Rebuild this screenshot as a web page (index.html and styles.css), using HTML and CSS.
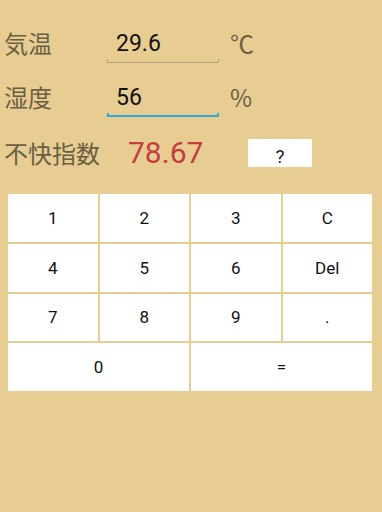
FILE: index.html
```html
<!DOCTYPE html>
<html lang="ja">
<head>
<meta charset="utf-8">
<title>不快指数</title>
<link rel="stylesheet" href="styles.css">
</head>
<body>
<div class="app">
  <div class="row row-temp">
    <div class="label">気温</div>
    <div class="field">
      <div class="val">29.6</div>
      <div class="line"></div>
    </div>
    <div class="unit">℃</div>
  </div>
  <div class="row row-hum">
    <div class="label">湿度</div>
    <div class="field focused">
      <div class="val">56</div>
      <div class="line"></div>
    </div>
    <div class="unit">%</div>
  </div>
  <div class="row row-result">
    <div class="label label-wide">不快指数</div>
    <div class="result">78.67</div>
    <div class="help">?</div>
  </div>
  <div class="keypad">
    <div class="key">1</div>
    <div class="key">2</div>
    <div class="key">3</div>
    <div class="key">C</div>
    <div class="key">4</div>
    <div class="key">5</div>
    <div class="key">6</div>
    <div class="key">Del</div>
    <div class="key">7</div>
    <div class="key">8</div>
    <div class="key">9</div>
    <div class="key">.</div>
    <div class="key key-wide">0</div>
    <div class="key key-wide">=</div>
  </div>
</div>
</body>
</html>
```

FILE: styles.css
```css
html, body {
  margin: 0;
  padding: 0;
  background: #e8cd92;
}

body {
  width: 382px;
  height: 512px;
  overflow: hidden;
  font-family: Roboto, "Noto Sans CJK JP", sans-serif;
}

.app {
  padding-top: 16px;
}

.row {
  display: flex;
  align-items: center;
  height: 54px;
}

.row-result {
  height: 58px;
}

.label {
  font-family: "Noto Sans CJK JP", sans-serif;
  font-size: 24px;
  color: #6b5e45;
  width: 103px;
  padding-left: 4px;
  line-height: 30px;
}

.label-wide {
  width: 124px;
}

.field {
  width: 112px;
  height: 40px;
  display: flex;
  flex-direction: column;
}

.val {
  font-family: Roboto, sans-serif;
  font-size: 23px;
  color: #111;
  height: 33px;
  padding-top: 3px;
  line-height: 36px;
  padding-left: 9px;
}

.line {
  height: 3px;
  border-style: solid;
  border-color: #b4a17e;
  border-width: 0 1px 1px 1px;
}

.focused .line {
  height: 2px;
  border-color: #36a9d8;
  border-width: 0 2px 2px 2px;
}

.unit {
  font-family: "Noto Sans CJK JP", sans-serif;
  font-size: 24px;
  color: #6b5e45;
  margin-left: 11px;
  line-height: 30px;
}

.result {
  font-family: Roboto, sans-serif;
  font-size: 30px;
  color: #c93c3d;
  width: 120px;
  line-height: 34px;
}

.help {
  width: 64px;
  height: 28px;
  background: #fff;
  color: #222;
  font-family: Roboto, sans-serif;
  font-size: 19px;
  text-align: center;
  line-height: 36px;
  overflow: hidden;
  box-sizing: border-box;
}

.keypad {
  margin: 12px 10px 0 8px;
  display: grid;
  grid-template-columns: repeat(4, 1fr);
  grid-template-rows: repeat(4, 1fr);
  gap: 2px;
  height: 197px;
}

.key {
  background: #fff;
  color: #111;
  font-family: Roboto, sans-serif;
  font-size: 17px;
  display: flex;
  align-items: center;
  justify-content: center;
}

.key-wide {
  grid-column: span 2;
}
```
